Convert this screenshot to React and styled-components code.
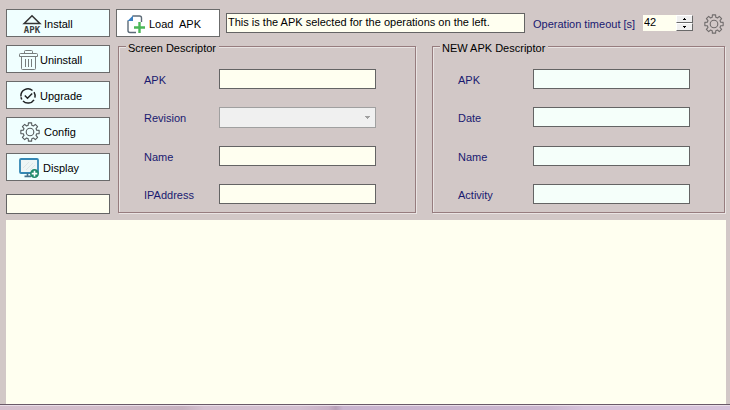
import React, { useState } from "react";
import styled, { createGlobalStyle } from "styled-components";

const GlobalStyle = createGlobalStyle`
  *, *::before, *::after { box-sizing: border-box; }
  body { margin: 0; background: #d2c8c7; }
  button, input, select, textarea { font: inherit; }
`;

const Window = styled.div`
  display: flex;
  flex-direction: column;
  min-height: 100vh;
  background: #d2c8c7;
  color: #000;
  font-family: "Liberation Sans", Arial, sans-serif;
  font-size: 11px;
  line-height: 14px;
`;

const Controls = styled.div`
  display: flex;
  gap: 6px;
  padding: 9px 4px 6px 6px;
`;

const Sidebar = styled.nav`
  display: flex;
  flex-direction: column;
  flex: none;
  width: 104px;
  gap: 8px;
`;

const Main = styled.main`
  display: flex;
  flex-direction: column;
  flex: 1;
  min-width: 0;
`;

const ActionButton = styled.button`
  display: flex;
  align-items: center;
  flex: none;
  width: 104px;
  height: 28px;
  gap: ${(p) => p.$gap}px;
  padding: 2px 0 0 ${(p) => p.$inset}px;
  border: 1px solid #6b6b6b;
  border-radius: 0;
  background: ${(p) => (p.$plain ? "#ffffff" : "#f0ffff")};
  color: #000;
  white-space: pre;
  text-align: left;
`;

const Icon = styled.svg`
  display: block;
  flex: none;
  overflow: visible;
`;

const TextBox = styled.input`
  display: block;
  width: 100%;
  min-width: 0;
  height: 20px;
  padding: 0 1px 2px;
  border: 1px solid #646464;
  border-radius: 0;
  background: ${(p) => (p.$mint ? "#f5fffa" : "#fffff0")};
  color: #000;
  outline: none;
`;

const StatusBox = styled(TextBox)`
  margin-top: 5px;
`;

const Toolbar = styled.header`
  display: flex;
  align-items: center;
  gap: 6px;
  height: 28px;
`;

const TimeoutLabel = styled.label`
  flex: none;
  width: 106px;
  margin-left: 2px;
  padding-top: 2px;
  color: #191970;
  white-space: nowrap;
`;

const Spinner = styled.div`
  display: flex;
  flex: none;
  width: 50px;
  height: 16px;
  margin-left: -2px;
  background: #fffff0;
`;

const SpinnerInput = styled.input`
  width: 33px;
  height: 14px;
  padding: 0 1px;
  border: 0;
  background: transparent;
  outline: none;
`;

const SpinnerArrows = styled.div`
  display: grid;
  grid-template-rows: 8px 8px;
  width: 17px;
`;

const ArrowButton = styled.button`
  display: flex;
  align-items: center;
  justify-content: center;
  padding: 0;
  border: 1px solid;
  border-color: #fff #696969 #696969 #fff;
  border-radius: 0;
  background: #f0f0f0;
`;

const SettingsButton = styled.button`
  display: flex;
  flex: none;
  margin-left: 5px;
  padding: 1px 2px 0 0;
  border: 0;
  background: transparent;
`;

const Groups = styled.div`
  display: grid;
  grid-template-columns: 298fr 293fr;
  gap: 16px;
  margin: 1px 1px 0 2px;
`;

const Group = styled.fieldset`
  min-width: 0;
  margin: 0;
  padding: 14px ${(p) => p.$end}px 8px ${(p) => p.$start}px;
  border: 1px solid #967c7e;
  box-shadow: 1px 1px 0 #e9e4e3, inset 1px 1px 0 #e9e4e3;
`;

const GroupTitle = styled.legend`
  margin-left: ${(p) => p.$shift}px;
  padding: 3px 3px 0 2px;
  background: #d2c8c7;
`;

const Fields = styled.div`
  display: grid;
  grid-template-columns: 75px 1fr;
  grid-template-rows: 20px 21px 20px 20px;
  row-gap: 18px;
`;

const FieldLabel = styled.label`
  padding-top: 4px;
  color: #191970;
`;

const SelectBox = styled.div`
  display: grid;
  align-items: center;
`;

const RevisionSelect = styled.select`
  grid-area: 1 / 1;
  appearance: none;
  width: 100%;
  height: 21px;
  border: 1px solid #a0a0a0;
  border-radius: 0;
  background: #f0f0f0;
  opacity: 1;
`;

const SelectArrow = styled(Icon)`
  grid-area: 1 / 1;
  justify-self: end;
  margin-right: 6px;
  pointer-events: none;
`;

const Log = styled.textarea`
  display: block;
  flex: 1;
  min-height: 120px;
  margin: 0 4px 0 6px;
  padding: 4px;
  border: 0;
  background: #fffff0;
  outline: none;
  resize: none;
`;

const BottomEdge = styled.footer`
  height: 6px;
  border-top: 1px solid #6a5a68;
  box-shadow: inset 0 1px 0 #eadfe8;
  background: linear-gradient(90deg, #d6c1cf 0%, #d3bdcb 13%, #c6b1bf 25%, #d5c1d1 28%, #d3bfd0 41%, #c8b0c6 45%, #b79fb7 46%, #c9b4cf 47%, #cbb6cf 75%, #d7c3db 80%, #d7c3db 100%);
`;

const gearPath = (() => {
  const points = [];
  for (let i = 0; i < 8; i += 1) {
    [[-15, 6.9], [-10, 9.3], [10, 9.3], [15, 6.9]].forEach(([offset, radius]) => {
      const angle = ((i * 45 + offset) * Math.PI) / 180;
      points.push(`${(10 + radius * Math.sin(angle)).toFixed(2)} ${(10 - radius * Math.cos(angle)).toFixed(2)}`);
    });
  }
  return `M${points.join("L")}Z`;
})();

const GearIcon = ({ color = "#555b5d" }) => (
  <Icon width="20" height="20" viewBox="0 0 20 20" fill="none" stroke={color} strokeWidth="1.1" strokeLinejoin="round" aria-hidden="true">
    <path d={gearPath} />
    <circle cx="10" cy="10" r="3.8" />
  </Icon>
);

const InstallIcon = () => (
  <Icon width="20" height="20" viewBox="0 0 20 20" aria-hidden="true">
    <path d="M2.2 9.5L10 1.8L17.8 9.5Z" fill="none" stroke="#343434" strokeWidth="1.6" />
    <text x="10" y="19" textAnchor="middle" fontFamily="DejaVu Sans Mono" fontWeight="700" fontSize="9" fill="#3c4040">APK</text>
  </Icon>
);

const TrashIcon = () => (
  <Icon width="19" height="20" viewBox="0 0 19 20" fill="none" stroke="#777d7d" strokeWidth="1" aria-hidden="true">
    <path d="M5.5 3.5V1.5Q5.5 .5 6.5 .5H12.5Q13.5 .5 13.5 1.5V3.5M1.5 3.5H17.5Q18.5 3.5 18.5 4.5V6.5H.5V4.5Q.5 3.5 1.5 3.5ZM2.5 6.5V18.5Q2.5 19.5 3.5 19.5H15.5Q16.5 19.5 16.5 18.5V6.5M6.5 9V17M9.5 9V17M12.5 9V17" />
  </Icon>
);

const UpgradeIcon = () => (
  <Icon width="16" height="16" viewBox="0 0 16 16" fill="none" stroke="#202426" strokeWidth="1.5" aria-hidden="true">
    <path d="M.9 8.5A7.1 7.1 0 0 1 12.5 2.5M14 4.2A7.1 7.1 0 0 1 14.9 9.6M14 11.8A7.1 7.1 0 0 1 3 13M1.8 11.5L.9 9.2M4.8 7.5L7.5 10.2L12.2 5.5" />
  </Icon>
);

const DisplayIcon = () => (
  <Icon width="20" height="20" viewBox="0 0 20 20" aria-hidden="true">
    <rect x="1" y="1" width="18" height="14" rx="1" fill="#eef5f5" stroke="#3487b4" strokeWidth="1.8" />
    <path d="M4 10L10 4M7 12L14 5M11 12L16 7" stroke="#dce6e6" strokeWidth="1" />
    <path d="M8.5 15V18M5.5 18.4H12" stroke="#45718a" strokeWidth="1.6" fill="none" />
    <circle cx="15.5" cy="15.6" r="4.5" fill="#1f8a6a" />
    <path d="M15.5 12.8V18.4M12.7 15.6H18.3" stroke="#fff" strokeWidth="1.6" />
  </Icon>
);

const LoadIcon = () => (
  <Icon width="19" height="19" viewBox="0 0 19 19" fill="none" aria-hidden="true">
    <path d="M5.5 1H12.5Q14.5 1 14.5 3V7M1 5.5V15.5Q1 17.5 3 17.5H9" stroke="#5d6b78" strokeWidth="1.4" />
    <path d="M.5 6L6 .5V6Z" fill="#3c7fc0" />
    <path d="M12.5 7V18M7 12.5H18" stroke="#4bb756" strokeWidth="2.4" />
  </Icon>
);

const actions = [
  { label: "Install", icon: InstallIcon, inset: 15, gap: 2 },
  { label: "Uninstall", icon: TrashIcon, inset: 12, gap: 2 },
  { label: "Upgrade", icon: UpgradeIcon, inset: 13, gap: 4 },
  { label: "Config", icon: GearIcon, inset: 13, gap: 4 },
  { label: "Display", icon: DisplayIcon, inset: 12, gap: 4 },
];

const TextField = ({ id, label, mint }) => (
  <>
    <FieldLabel htmlFor={id}>{label}</FieldLabel>
    <TextBox id={id} $mint={mint} />
  </>
);

export default function App() {
  const [timeout, setTimeoutValue] = useState(42);
  return (
    <Window>
      <GlobalStyle />
      <Controls>
        <Sidebar>
          {actions.map(({ label, icon: Glyph, inset, gap }) => (
            <ActionButton key={label} type="button" $inset={inset} $gap={gap}>
              <Glyph />
              {label}
            </ActionButton>
          ))}
          <StatusBox aria-label="Status" />
        </Sidebar>
        <Main>
          <Toolbar>
            <ActionButton type="button" $plain $inset={10} $gap={3}>
              <LoadIcon />
              {"Load  APK"}
            </ActionButton>
            <TextBox aria-label="Selected APK" defaultValue="This is the APK selected for the operations on the left." />
            <TimeoutLabel htmlFor="timeout">Operation timeout [s]</TimeoutLabel>
            <Spinner>
              <SpinnerInput id="timeout" value={timeout} onChange={(e) => setTimeoutValue(Number(e.target.value) || 0)} />
              <SpinnerArrows>
                <ArrowButton type="button" aria-label="Increase" onClick={() => setTimeoutValue(timeout + 1)}>
                  <Icon width="3" height="2" viewBox="0 0 3 2" shapeRendering="crispEdges"><path d="M1 0H2V1H3V2H0V1H1Z" /></Icon>
                </ArrowButton>
                <ArrowButton type="button" aria-label="Decrease" onClick={() => setTimeoutValue(Math.max(0, timeout - 1))}>
                  <Icon width="3" height="2" viewBox="0 0 3 2" shapeRendering="crispEdges"><path d="M0 0H3V1H2V2H1V1H0Z" /></Icon>
                </ArrowButton>
              </SpinnerArrows>
            </Spinner>
            <SettingsButton type="button" aria-label="Settings">
              <GearIcon color="#706c6c" />
            </SettingsButton>
          </Toolbar>
          <Groups>
            <Group $start={25} $end={39}>
              <GroupTitle $shift={-18}>Screen Descriptor</GroupTitle>
              <Fields>
                <TextField id="screen-apk" label="APK" />
                <FieldLabel htmlFor="revision">Revision</FieldLabel>
                <SelectBox>
                  <RevisionSelect id="revision" disabled />
                  <SelectArrow width="5" height="3" viewBox="0 0 5 3" fill="#a0a0a0" shapeRendering="crispEdges">
                    <path d="M0 0H5V1H4V2H3V3H2V2H1V1H0Z" />
                  </SelectArrow>
                </SelectBox>
                <TextField id="screen-name" label="Name" />
                <TextField id="ip-address" label="IPAddress" />
              </Fields>
            </Group>
            <Group $start={25} $end={34}>
              <GroupTitle $shift={-18}>NEW APK Descriptor</GroupTitle>
              <Fields>
                <TextField id="new-apk" label="APK" mint />
                <TextField id="new-date" label="Date" mint />
                <TextField id="new-name" label="Name" mint />
                <TextField id="new-activity" label="Activity" mint />
              </Fields>
            </Group>
          </Groups>
        </Main>
      </Controls>
      <Log aria-label="Log" readOnly />
      <BottomEdge />
    </Window>
  );
}
